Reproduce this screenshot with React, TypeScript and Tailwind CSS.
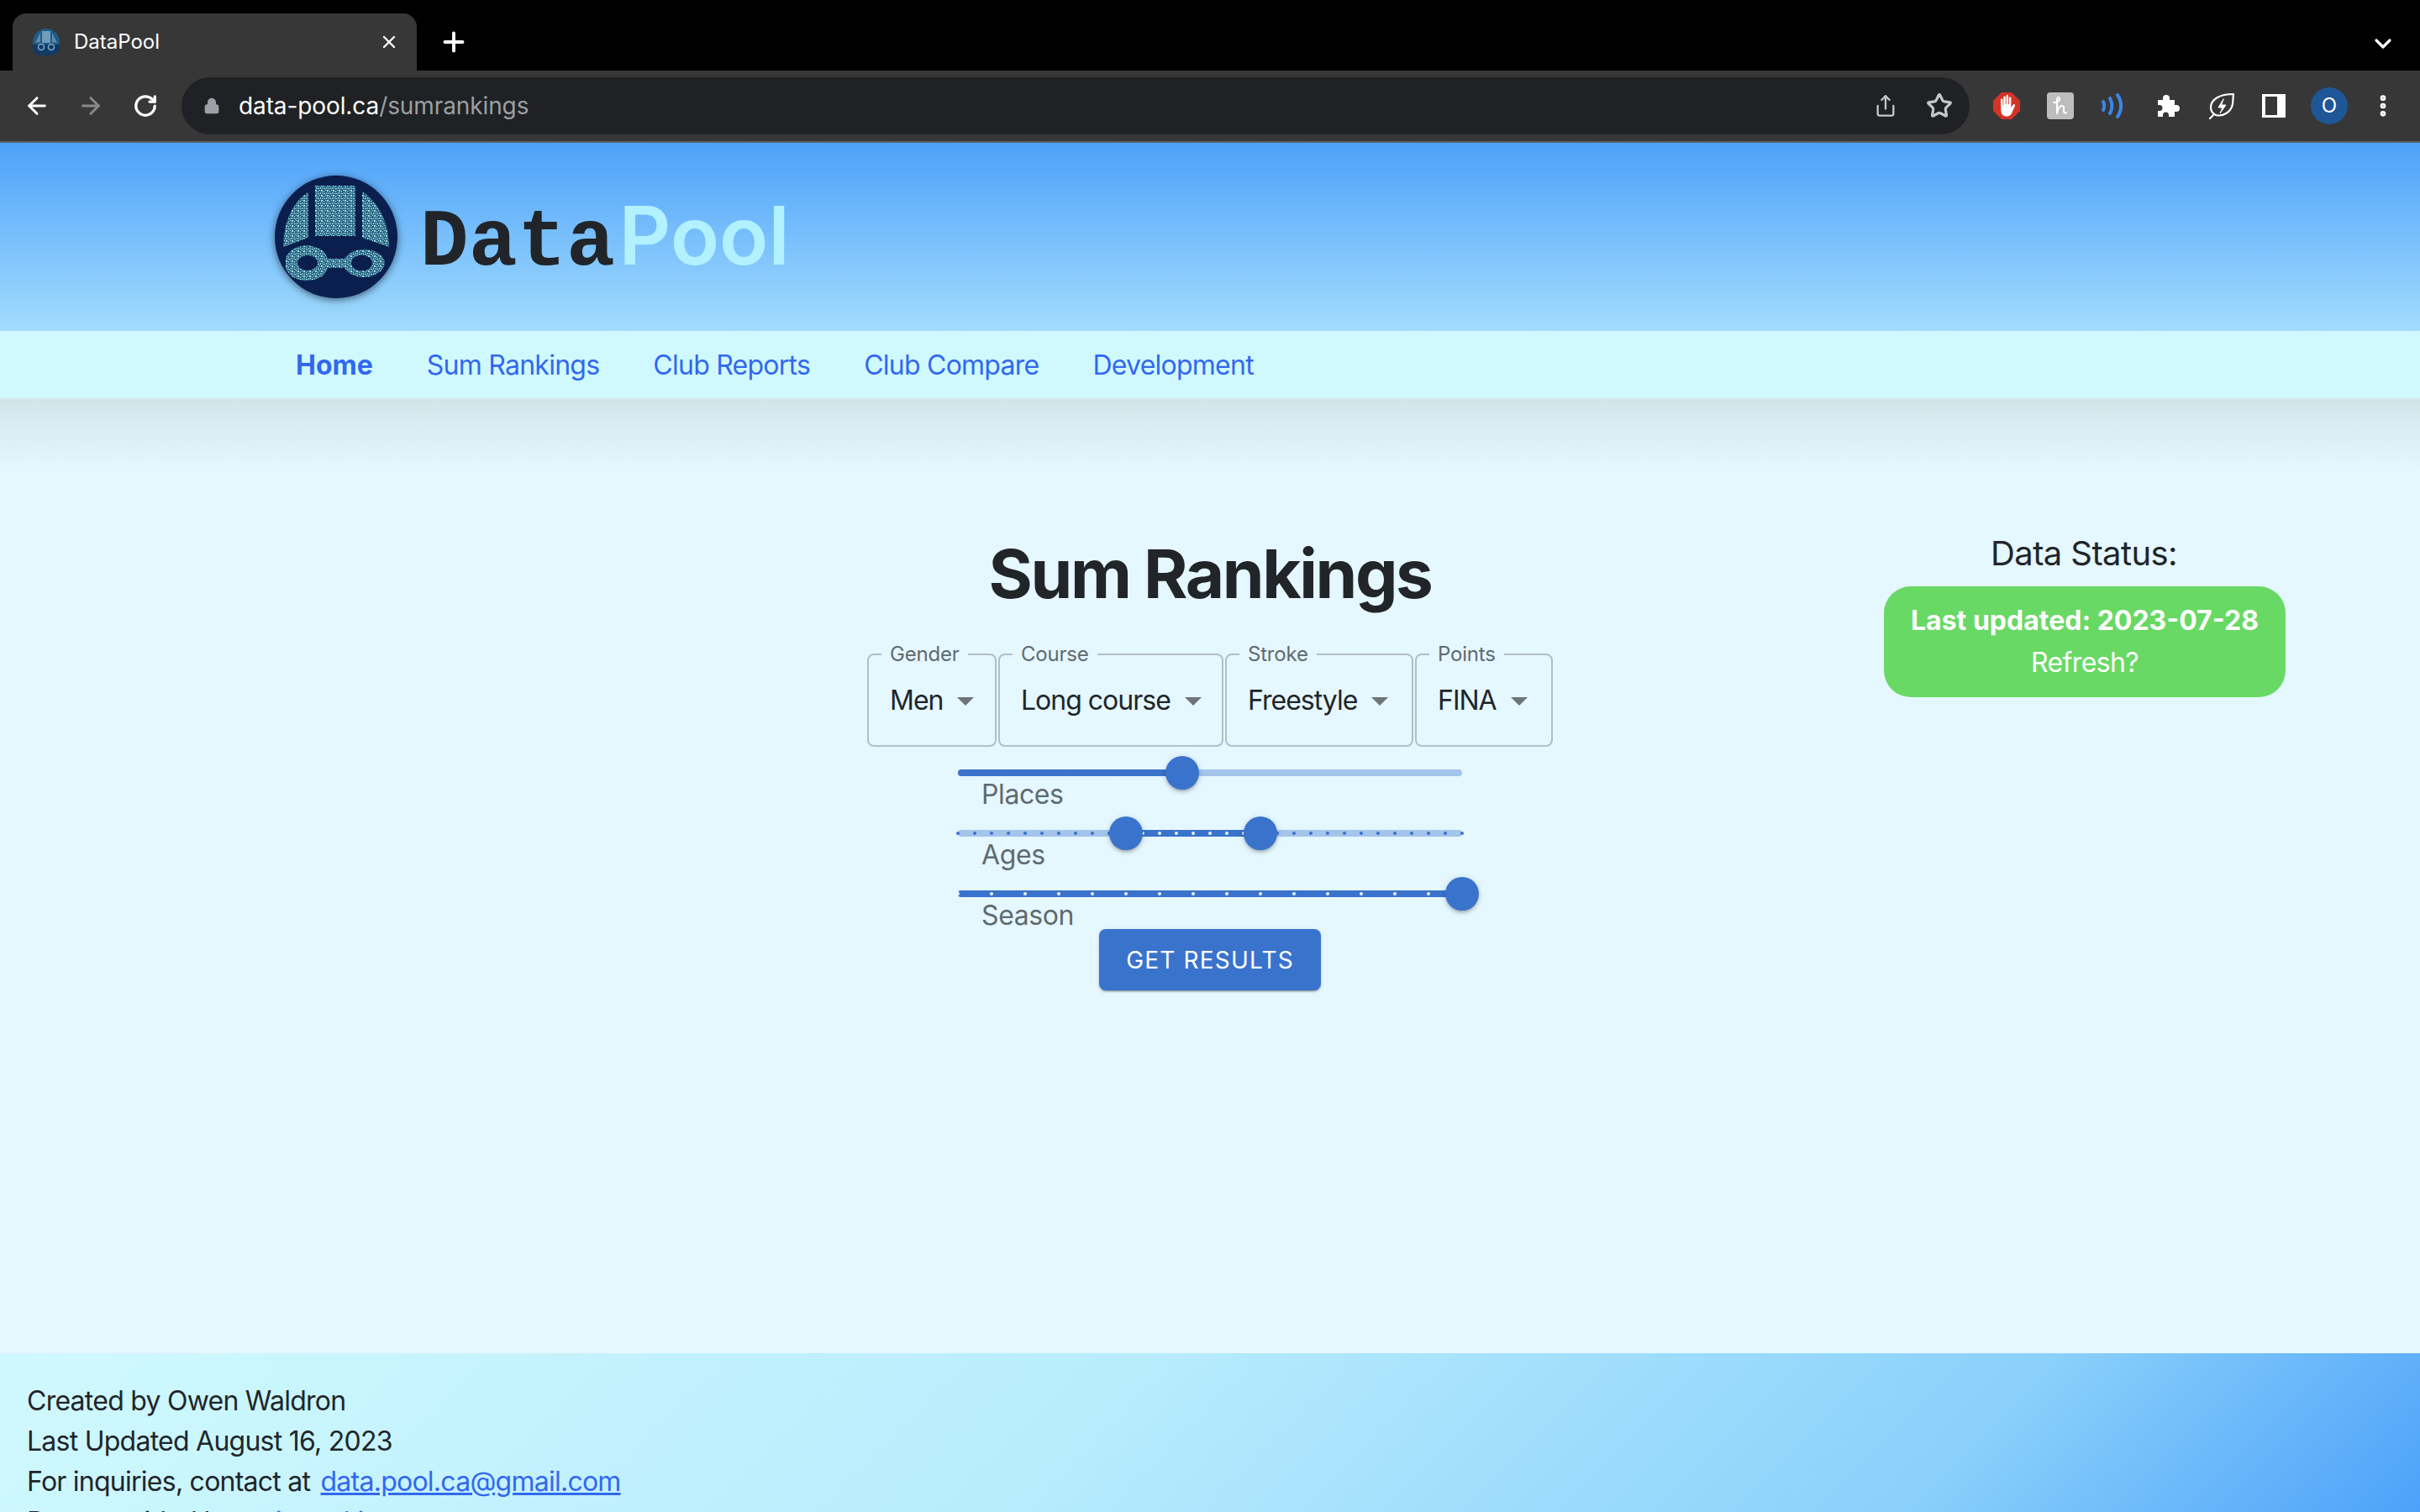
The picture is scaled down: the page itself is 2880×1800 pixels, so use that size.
import React from "react";
import { ArrowLeft, ArrowRight, ChevronDown, MoreVertical, Plus, RotateCw, Star, Share, X, Lock } from "lucide-react";

const sliderTicks = (count: number) => Array.from({ length: count + 1 }, (_, i) => i);

const Logo = () => (
  <svg width="148" height="148" viewBox="0 0 148 148" className="drop-shadow-[0_2px_5px_rgba(0,0,0,0.55)]">
    <defs>
      <pattern id="bits" width="7" height="6" patternUnits="userSpaceOnUse">
        <rect width="7" height="6" fill="#2b6585" />
        <rect x="0" y="0" width="2" height="2" fill="#a4dde2" />
        <rect x="3" y="1" width="1" height="2" fill="#7fc0cc" />
        <rect x="5" y="0" width="1" height="1" fill="#c2eef0" />
        <rect x="1" y="3" width="1" height="2" fill="#7fc0cc" />
        <rect x="3" y="4" width="2" height="1" fill="#a4dde2" />
        <rect x="6" y="3" width="1" height="2" fill="#8fd0d8" />
      </pattern>
    </defs>
    <circle cx="74" cy="74" r="73" fill="#0a1f4e" />
    <rect x="49" y="13" width="48" height="60" fill="url(#bits)" />
    <path d="M41 21 C24 31 12 52 11 86 L41 75 Z" fill="url(#bits)" />
    <path d="M105 20 C122 31 136 52 137 86 L105 75 Z" fill="url(#bits)" />
    <path
      fillRule="evenodd"
      fill="url(#bits)"
      d="M14 105a25 18 0 0 1 50-5h20a25 18 0 0 1 48 5a25 18 0 0 1-48 6H64a25 18 0 0 1-50-6Z M28 105a12 9 0 0 0 24 0a12 9 0 0 0-24 0Z M92 105a12 9 0 0 0 25 0a12 9 0 0 0-25 0Z"
    />
  </svg>
);

const HandIcon = () => (
  <svg width="32" height="32" viewBox="0 0 32 32">
    <path d="M10 0h12l10 10v12L22 32H10L0 22V10Z" fill="#d33427" />
    <path
      d="M9 9c0-2 2.500-2 2.500 0v6h.8V6c0-2 2.500-2 2.500 0v8h.8V4.500c0-2 2.500-2 2.500 0V14h.8V7c0-2 2.500-2 2.500 0v11l2-3c1.300-1.800 3.300-.6 2.500 1l-3 7c-1 3-3 5.500-6.500 5.500-4.500 0-6.900-2.500-7-7Z"
      fill="#fff"
    />
  </svg>
);

const LeafIcon = () => (
  <svg width="32" height="32" viewBox="0 0 32 32" fill="none" stroke="#fff" strokeWidth="2.200" strokeLinejoin="round" strokeLinecap="round">
    <path d="M30 2C14 2 3 8 3 18c0 4 2 7 6 9 8 2 18-3 20-13Z" />
    <path d="M2 31l5-5" />
    <path d="M18 8l-6 10h5l-3 7 7-10h-5Z" fill="#fff" strokeWidth="1" />
  </svg>
);

const BrowserChrome = () => (
  <div className="font-['Inter',sans-serif]">
    <div className="flex h-[84px] items-end justify-between bg-black pl-[15px] pr-[28px]">
      <div className="flex items-end">
        <div className="flex h-[68px] w-[481px] items-center rounded-t-[16px] bg-[#373737] pl-6 pr-[21px]">
          <svg width="32" height="32" viewBox="0 0 32 32" className="shrink-0">
            <circle cx="16" cy="16" r="16" fill="#1f5c84" />
            <rect x="11" y="3" width="10" height="14" fill="#6f9cb8" />
            <path d="M9 5 3 17l6-1Z M23 5l6 12-6-1Z" fill="#5f8cab" />
            <path d="M0 19h32v5c-3 8-9 8-16 8S3 32 0 24Z" fill="#123a68" />
            <circle cx="10" cy="22" r="3.500" fill="none" stroke="#7fa9c2" strokeWidth="1.500" />
            <circle cx="22" cy="22" r="3.500" fill="none" stroke="#7fa9c2" strokeWidth="1.500" />
          </svg>
          <span className="ml-[17px] text-[24px] text-white">DataPool</span>
          <X className="ml-auto text-white" size={24} strokeWidth={2.4} />
        </div>
        <Plus className="mb-[16px] ml-[26px] text-white" size={36} strokeWidth={2.6} />
      </div>
      <ChevronDown className="mb-[16px] text-white" size={32} strokeWidth={2.4} />
    </div>
    <div className="flex h-[86px] items-center border-b-2 border-[#5a6068] bg-[#373737] pl-[28px] pr-[22px]">
      <ArrowLeft className="text-white" size={32} strokeWidth={2.2} />
      <ArrowRight className="ml-[32px] text-[#8a8a8a]" size={32} strokeWidth={2.2} />
      <RotateCw className="ml-[34px] text-white" size={30} strokeWidth={2.6} />
      <div className="ml-[28px] flex h-[68px] w-[2128px] items-center rounded-full bg-[#202124] pl-[26px] pr-[20px]">
        <Lock className="text-[#9aa0a6]" size={20} fill="#9aa0a6" />
        <span className="ml-[22px] text-[28px] tracking-[-0.1px] text-white">
          data-pool.ca<span className="text-[#9aa0a6]">/sumrankings</span>
        </span>
        <Share className="ml-auto text-[#c4c7c5]" size={28} strokeWidth={2} />
        <Star className="ml-[34px] text-[#c4c7c5]" size={32} strokeWidth={2.4} />
      </div>
      <div className="ml-[28px] flex items-center gap-[32px]">
        <HandIcon />
        <div className="flex h-[32px] w-[32px] items-center justify-center rounded-[4px] bg-[#bdbdbd]">
          <svg width="20" height="24" viewBox="0 0 20 24" fill="none" stroke="#fff" strokeWidth="2" strokeLinecap="round" strokeLinejoin="round">
            <path d="M2 8c3 0 7-1 7-4S6 1 6 5v16c1-6 3-9 6-9s2 4 2 6 1 3 3 2" />
          </svg>
        </div>
        <svg width="32" height="32" viewBox="0 0 32 32" fill="none" stroke="#3a86e8" strokeWidth="4" strokeLinecap="round">
          <path d="M3 11c1.500 3 1.500 7 0 10" />
          <path d="M11 7c3 5.500 3 12.500 0 18" />
          <path d="M20 3c5.500 8 5.500 18 0 26" />
        </svg>
        <svg width="32" height="32" viewBox="0 0 32 32" fill="#fff">
          <path d="M4 9h6V7a4 4 0 0 1 8 0v2h6v6h2a4 4 0 0 1 0 8h-2v6h-7v-2a3.500 3.500 0 0 0-7 0v2H4v-7h2a3.500 3.500 0 0 0 0-7H4Z" />
        </svg>
        <LeafIcon />
        <div className="h-[28px] w-[28px] border-y-[3px] border-l-[4px] border-r-[10px] border-white" />
        <div className="-ml-[2px] flex h-[44px] w-[44px] items-center justify-center rounded-full bg-[#1f5697] text-[24px] text-white">O</div>
        <MoreVertical className="-ml-[6px] text-white" size={32} strokeWidth={3} />
      </div>
    </div>
  </div>
);

const Select = ({ label, value, className }: { label: string; value: string; className: string }) => (
  <div className={`relative h-[111px] rounded-[8px] border-2 border-[#b2bfc6] ${className}`}>
    <span className="absolute -top-[13px] left-[15px] bg-[#e5f7ff] px-2.5 text-[24px] leading-[24px] tracking-[-0.2px] text-[#5f6a70]">{label}</span>
    <div className="flex h-full items-center pl-[25px] text-[32px] tracking-[-1px] text-[#212529]">
      {value}
      <span className="ml-[17px] mt-[2px] h-0 w-0 border-x-[10px] border-t-[10px] border-x-transparent border-t-[#6e7478]" />
    </div>
  </div>
);

const Thumb = ({ pos }: { pos: number }) => (
  <span
    className="absolute top-1/2 h-[40px] w-[40px] -translate-x-1/2 -translate-y-1/2 rounded-full bg-[#3973cc] shadow-[0_3px_3px_-2px_rgba(0,0,0,0.2),0_3px_4px_0_rgba(0,0,0,0.14),0_1px_8px_0_rgba(0,0,0,0.12)]"
    style={{ left: `${pos}%` }}
  />
);

type SliderProps = { label: string; from: number; to: number; ticks?: number };

const Slider = ({ label, from, to, ticks }: SliderProps) => (
  <div className="h-[72px] w-[600px]">
    <div className="relative h-[8px] rounded-full bg-[#a3c4eb]">
      <div className="absolute inset-y-0 rounded-full bg-[#3973cc]" style={{ left: `${from}%`, right: `${100 - to}%` }} />
      {ticks
        ? sliderTicks(ticks).map((t) => {
            const p = (t / ticks) * 100;
            const active = p >= from && p <= to;
            return (
              <span
                key={t}
                className={active ? "absolute top-[2px] h-[4px] w-[4px] -translate-x-1/2 rounded-full bg-[#e5f7ff]" : "absolute top-[2px] h-[4px] w-[4px] -translate-x-1/2 rounded-full bg-[#3973cc]"}
                style={{ left: `${p}%` }}
              />
            );
          })
        : null}
      {from > 0 ? <Thumb pos={from} /> : null}
      <Thumb pos={to} />
    </div>
    <div className="pl-[28px] pt-[2px] text-[32px] leading-[40px] tracking-[-0.4px] text-[#5f6a70]">{label}</div>
  </div>
);

const App = () => {
  return (
    <div className="flex h-[1800px] flex-col overflow-hidden bg-[#e5f7ff] font-['Inter',sans-serif] text-[#212529]">
      <BrowserChrome />

      {/* header */}
      <header className="flex h-[224px] shrink-0 items-center bg-gradient-to-b from-[#4da1f9] to-[#a2dcfd] pl-[326px]">
        <Logo />
        <div className="ml-[26px] mt-[6px] flex items-baseline text-[96px] leading-none">
          <span className="font-['Liberation_Mono',monospace] font-bold tracking-[0.5px] text-[#212529]">Data</span>
          <span className="ml-[4px] font-semibold text-[#b2f1ff]">Pool</span>
        </div>
      </header>

      {/* nav */}
      <nav className="flex h-[80px] shrink-0 items-center gap-[64px] bg-[#d0f9fe] pl-[352px] pt-[2px] text-[32px] tracking-[-0.75px] text-[#3268f0]">
        <a className="font-bold tracking-normal">Home</a>
        <a>Sum Rankings</a>
        <a>Club Reports</a>
        <a>Club Compare</a>
        <a>Development</a>
      </nav>

      <main className="grid flex-1 grid-cols-[800px_1fr_800px] bg-gradient-to-b from-[#d3e4e9] to-[#e5f7ff] to-[86px] bg-no-repeat">
        <div />
        <div className="flex flex-col items-center pt-[161px]">
          <h1 className="text-[80px] font-bold leading-[96px] tracking-[-2.4px]">Sum Rankings</h1>
          <div className="mt-[47px] flex gap-[2px]">
            <Select label="Gender" value="Men" className="w-[154px]" />
            <Select label="Course" value="Long course" className="w-[268px]" />
            <Select label="Stroke" value="Freestyle" className="w-[224px]" />
            <Select label="Points" value="FINA" className="w-[164px]" />
          </div>
          <div className="mt-[27px] flex flex-col">
            <Slider label="Places" from={0} to={44.5} />
            <Slider label="Ages" from={33.3} to={60} ticks={30} />
            <Slider label="Season" from={0} to={100} ticks={15} />
          </div>
          <button className="-mt-[26px] h-[73px] w-[264px] rounded-[8px] bg-[#3973cc] text-[28px] font-normal tracking-[1.2px] text-white shadow-[0_3px_1px_-2px_rgba(0,0,0,0.2),0_2px_2px_0_rgba(0,0,0,0.14),0_1px_5px_0_rgba(0,0,0,0.12)]">
            GET RESULTS
          </button>
        </div>
        <div className="flex flex-col items-center pt-[161px]">
          <h4 className="text-[40px] leading-[48px] tracking-[-0.6px] text-[#212529]">Data Status:</h4>
          <div className="ml-[2px] mt-[15px] flex h-[132px] w-[478px] flex-col items-center justify-center rounded-[32px] bg-[#68d965] text-[32px] text-white">
            <span className="font-bold leading-[48px]">Last updated: 2023-07-28</span>
            <span className="pt-[2px] leading-[48px] tracking-[-0.6px]">Refresh?</span>
          </div>
        </div>
      </main>

      {/* footer */}
      <footer className="h-[189px] shrink-0 bg-[linear-gradient(135deg,#d0f9fe_0%,#b8ecfd_45%,#8ad0fb_80%,#4da1f9_100%)] pl-[32px] pt-[33px] text-[32px] leading-[48px] tracking-[-0.75px] text-[#212529]">
        <p>Created by Owen Waldron</p>
        <p>Last Updated August 16, 2023</p>
        <p>
          For inquiries, contact at <a className="ml-1 text-[#3268f0] underline">data.pool.ca@gmail.com</a>
        </p>
        <p>Data provided by <a className="text-[#3268f0] underline">swimrankings.net</a></p>
      </footer>
    </div>
  );
};

export default App;
